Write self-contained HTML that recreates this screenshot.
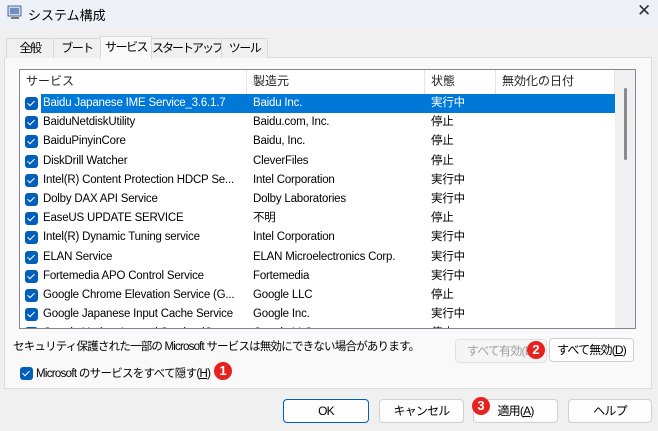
<!DOCTYPE html><html><head><meta charset="utf-8"><style>
*{box-sizing:border-box;margin:0;padding:0}
body{width:658px;height:431px;overflow:hidden;background:#f0f0f0;font-family:"Liberation Sans","Noto Sans CJK JP",sans-serif;font-size:12px;color:#000;position:relative}
.a{position:absolute;white-space:nowrap}
.title{left:0;top:0;width:658px;height:28px;background:#eef2f8}
.tab{top:38px;height:20px;border:1px solid #d9d9d9;border-bottom:none;background:#f0f0f0;text-align:center;line-height:18px;font-size:12px;letter-spacing:-1.5px}
.panel{left:4px;top:57px;width:648px;height:332px;background:#f9f9f9;border:1px solid #dcdcdc}
.lv{left:19px;top:69px;width:617px;height:260px;background:#fff;border:1px solid #828790;overflow:hidden}
.hd{top:0;height:24px;border-right:1px solid #e5e5e5;line-height:22px;padding-left:6px;color:#222}
.row{left:0;width:595px;height:19px;line-height:19px}
.cb{position:absolute;left:5px;top:3px;width:13px;height:13px;background:#005fb8;border-radius:3px}
.cb:after{content:"";position:absolute;left:4px;top:2px;width:3px;height:6px;border:solid #fff;border-width:0 1.5px 1.5px 0;transform:rotate(45deg)}
.c{position:absolute;top:0;white-space:nowrap;font-size:11.5px;letter-spacing:-0.2px}
.sel{background:#0078d7;color:#fff}
.btn{height:24px;border:1px solid #d0d0d0;background:#fdfdfd;border-radius:4px;text-align:center;line-height:22px;letter-spacing:-0.8px}
.num{width:18px;height:18px;border-radius:50%;background:#e8211e;color:#fff;font-weight:bold;text-align:center;line-height:18px;font-size:13px;letter-spacing:0}
</style></head><body>
<div class="a title"></div>
<svg class="a" style="left:7px;top:5px" width="16" height="15"><rect x="1" y="1" width="13" height="10" fill="#cfd8e6" stroke="#4a6a9a"/><rect x="3" y="3" width="9" height="6" fill="#6f8fc4"/><rect x="4" y="12" width="8" height="2" fill="#777"/></svg>
<div class="a" style="left:28px;top:5px;font-size:13px">システム構成</div>
<div class="a" style="left:637px;top:1px;font-size:17px;color:#333">✕</div>
<div class="a panel"></div>
<div class="a tab" style="left:6px;width:48px">全般</div>
<div class="a tab" style="left:53px;width:48px">ブート</div>
<div class="a tab" style="left:100px;width:52px;top:36px;height:23px;background:#f9f9f9;line-height:20px">サービス</div>
<div class="a tab" style="left:151px;width:71px;letter-spacing:-2px">スタートアップ</div>
<div class="a tab" style="left:221px;width:47px">ツール</div>
<div class="a lv">
<div class="a hd" style="left:0;width:227px">サービス</div>
<div class="a hd" style="left:227px;width:178px">製造元</div>
<div class="a hd" style="left:405px;width:71px">状態</div>
<div class="a hd" style="left:476px;width:119px">無効化の日付</div>
<div class="a" style="left:595px;top:0;width:20px;height:260px;background:#f0f0f0"></div>
<div class="a" style="left:604px;top:18px;width:3px;height:72px;background:#8a8a8a;border-radius:2px"></div>
<div id="rows"></div>
</div>
<script>
var d=[["Baidu Japanese IME Service_3.6.1.7","Baidu Inc.","実行中"],["BaiduNetdiskUtility","Baidu.com, Inc.","停止"],["BaiduPinyinCore","Baidu, Inc.","停止"],["DiskDrill Watcher","CleverFiles","停止"],["Intel(R) Content Protection HDCP Se...","Intel Corporation","実行中"],["Dolby DAX API Service","Dolby Laboratories","実行中"],["EaseUS UPDATE SERVICE","不明","停止"],["Intel(R) Dynamic Tuning service","Intel Corporation","実行中"],["ELAN Service","ELAN Microelectronics Corp.","実行中"],["Fortemedia APO Control Service","Fortemedia","実行中"],["Google Chrome Elevation Service (G...","Google LLC","停止"],["Google Japanese Input Cache Service","Google Inc.","実行中"],["Google Update Internal Service (G...","Google LLC","停止"]];
var h="";d.forEach(function(r,i){h+='<div class="a row" style="top:'+(24+i*19.2)+'px"><span class="cb"></span>'+(i==0?'<div class="a sel" style="left:21px;top:0;width:574px;height:19px"></div>':'')+'<span class="c" style="left:23px;'+(i==0?'color:#fff':'')+'">'+r[0]+'</span><span class="c" style="left:233px;'+(i==0?'color:#fff':'')+'">'+r[1]+'</span><span class="c" style="left:411px;'+(i==0?'color:#fff':'')+'">'+r[2]+'</span></div>'});
document.getElementById("rows").innerHTML=h;
</script>
<div class="a" style="left:13px;top:338px;letter-spacing:-0.8px;font-size:11.5px">セキュリティ保護された一部の Microsoft サービスは無効にできない場合があります。</div>
<div class="a btn" style="left:455px;top:339px;width:92px;color:#a0a0a0;border-color:#e0e0e0;background:#f5f5f5">すべて有効(E)</div>
<div class="a num" style="left:527px;top:341px">2</div>
<div class="a btn" style="left:549px;top:338px;width:85px">すべて無効(<u>D</u>)</div>
<div class="a" style="left:20px;top:367px;width:13px;height:13px"><span class="cb" style="left:0;top:0"></span></div>
<div class="a" style="left:36px;top:365px;letter-spacing:-0.7px;font-size:11.5px">Microsoft のサービスをすべて隠す(<u>H</u>)</div>
<div class="a num" style="left:214px;top:362px">1</div>
<div class="a btn" style="left:283px;top:399px;width:86px;border-color:#005fb8;border-width:1px">OK</div>
<div class="a btn" style="left:379px;top:399px;width:85px">キャンセル</div>
<div class="a btn" style="left:473px;top:399px;width:85px">適用(<u>A</u>)</div>
<div class="a num" style="left:472px;top:397px">3</div>
<div class="a btn" style="left:568px;top:399px;width:84px">ヘルプ</div>
</body></html>
